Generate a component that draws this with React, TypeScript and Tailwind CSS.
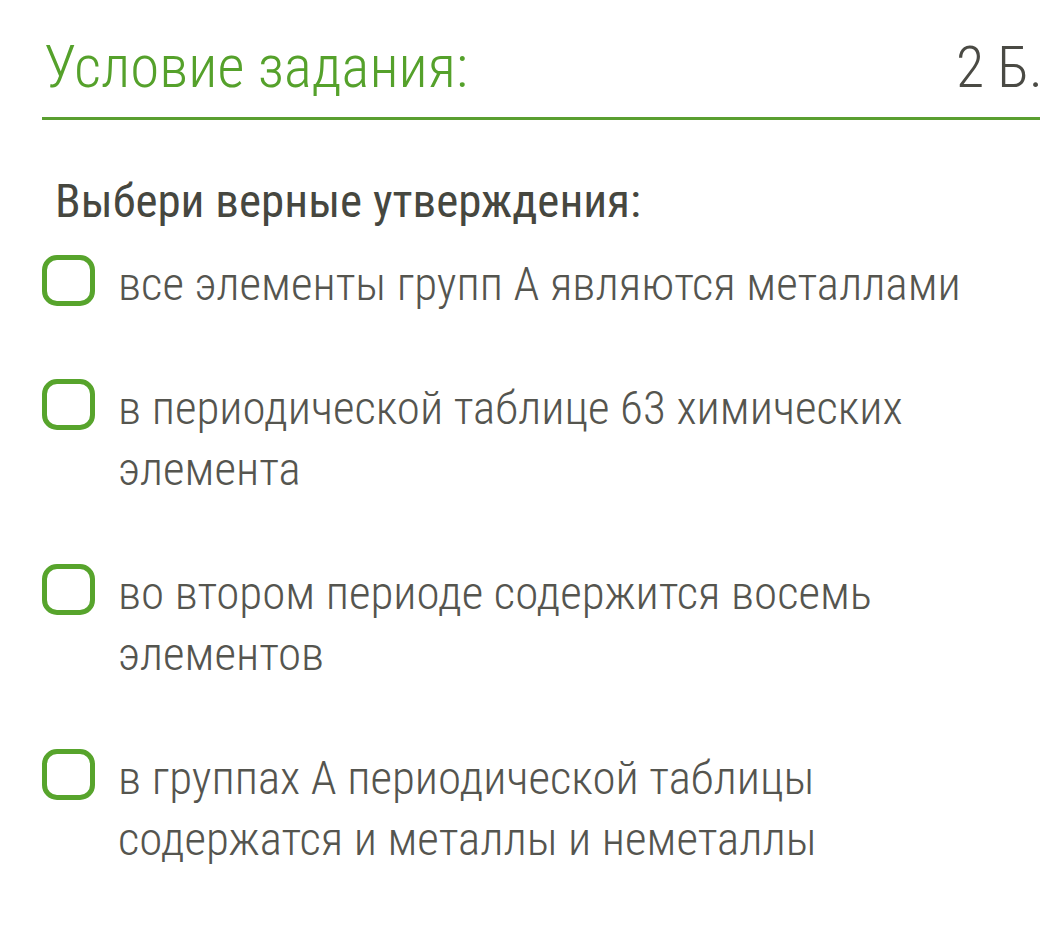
import React from "react";

const options = [
  "все элементы групп А являются металлами",
  "в периодической таблице 63 химических элемента",
  "во втором периоде содержится восемь элементов",
  "в группах А периодической таблицы содержатся и металлы и неметаллы",
];

export default function App() {
  return (
    <div
      className="w-[1044px] h-[948px] bg-white overflow-hidden"
      style={{ fontFamily: '"Roboto Condensed", "Liberation Sans Narrow", "DejaVu Sans Condensed", Roboto, sans-serif' }}
    >
      {/* Header */}
      <div className="ml-[42px] mr-[4px] pt-[36px] border-b-[3px] border-[#5a9f31]">
        <div className="flex items-baseline justify-between pl-[2px] pb-[19px]">
          <h1 className="text-[59px] leading-[62px] font-light text-[#55a12b]">Условие задания:</h1>
          <span className="-mr-[3px] text-[58px] leading-[62px] font-light text-[#4a4a44]">2 Б.</span>
        </div>
      </div>

      {/* Question */}
      <div className="pl-[55px] pt-[53px]">
        <p className="text-[47px] leading-[56px] text-[#46473f]">Выбери верные утверждения:</p>
      </div>

      <div className="flex flex-col gap-[63px] pl-[42px] pr-[40px] pt-[24px]">
        {options.map((t) => (
          <label key={t} className="flex items-start gap-[23px]">
            <span className="mt-[2px] w-[53px] h-[51px] shrink-0 rounded-[15px] border-[5px] border-[#57a42c]" />
            <span className="text-[47px] leading-[61px] font-light text-[#55554f]">{t}</span>
          </label>
        ))}
      </div>
    </div>
  );
}
